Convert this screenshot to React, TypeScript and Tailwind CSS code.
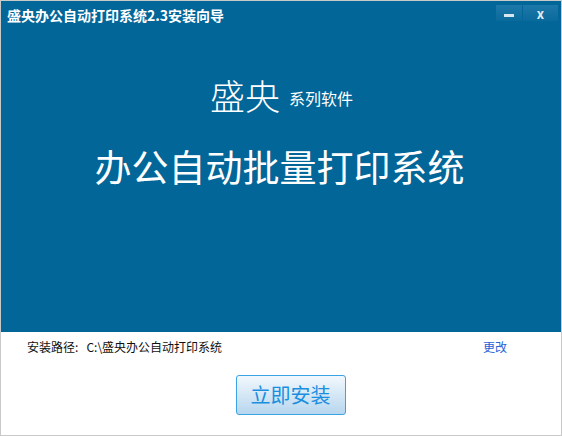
import { useState } from 'react';

const CJK = "font-['Microsoft_YaHei','Noto_Sans_CJK_SC',sans-serif]";

export default function App() {
  const [path] = useState('C:\\盛央办公自动打印系统');

  return (
    <div className={`w-[562px] h-[436px] flex flex-col bg-white border border-[#c9c9c9] ${CJK}`}>
      {/* Blue header */}
      <div className="h-[331px] bg-[#026699] flex flex-col">
        <div className="h-[28px] flex items-start justify-between">
          <span className="pl-[6px] pt-[4px] text-white text-[14px] font-bold leading-[20px]">
            盛央办公自动打印系统2.3安装向导
          </span>
          <div className="flex pt-[4px] pr-[3px]">
            <button className="w-[26px] h-[16px] bg-gradient-to-b from-[#1c78a8] to-[#0a6a9c] flex items-center justify-center">
              <span className="block w-[10px] h-[3px] bg-[#d7e6ef] mt-[5px]" />
            </button>
            <button className="w-[35px] h-[16px] ml-[1px] bg-gradient-to-b from-[#1c78a8] to-[#0a6a9c] flex items-center justify-center text-[#e2edf3] text-[13px] font-bold leading-none">
              x
            </button>
          </div>
        </div>

        <div className="flex items-end justify-center mt-[46px] pl-[1px]">
          <span className="text-white text-[35px] font-light leading-[40px]">盛央</span>
          <span className="text-white text-[16px] leading-[20px] ml-[9px] mb-[7px]">系列软件</span>
        </div>

        <div className="text-center text-white text-[37px] leading-[44px] mt-[29px] pr-[3px]">
          办公自动批量打印系统
        </div>
      </div>

      {/* Bottom area */}
      <div className="flex-1 flex flex-col">
        <div className="flex items-center justify-between pl-[26px] pr-[54px] mt-[6px] text-[12px] leading-[18px]">
          <span className="text-[#111]">
            安装路径:&nbsp;&nbsp;&nbsp;{path}
          </span>
          <span className="text-[#1f62d8]">更改</span>
        </div>
        <div className="flex justify-center mt-[19px] pl-[19px]">
          <button className="w-[110px] h-[40px] rounded-[3px] border border-[#3aa3e3] bg-gradient-to-b from-[#f2f8fd] to-[#b7d6ee] text-[#1a8fe0] text-[20px] leading-none">
            立即安装
          </button>
        </div>
      </div>
    </div>
  );
}
